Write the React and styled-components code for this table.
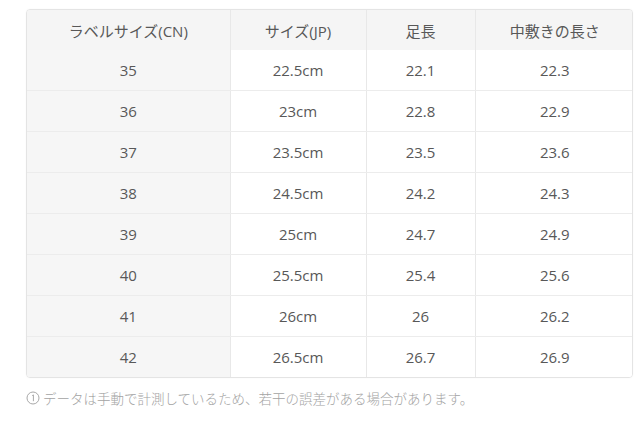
import React from 'react';
import styled, { createGlobalStyle } from 'styled-components';

const GlobalStyle = createGlobalStyle`
  body {
    margin: 0;
    background: #ffffff;
    font-family: "Open Sans", "Noto Sans CJK JP", sans-serif;
  }
`;

const Page = styled.div`
  padding: 9px 7px 0 26px;
  width: 607px;
`;

const TableWrap = styled.div`
  border: 1px solid #e4e4e4;
  border-radius: 4px;
  overflow: hidden;
  box-shadow: 0 0 2px rgba(0, 0, 0, 0.04);
`;

const Table = styled.table`
  width: 100%;
  border-collapse: collapse;
  table-layout: fixed;
  font-size: 15px;
  color: #585858;
`;

const Cell = styled.td`
  height: 40px;
  padding: 0;
  text-align: center;
  border-right: 1px solid #e8e8e8;
  border-bottom: 1px solid #ececec;
  background: ${p => (p.$shade ? '#f6f6f6' : '#ffffff')};
  font-weight: 400;
  &:last-child {
    border-right: none;
  }
  tr:last-child > & {
    border-bottom: none;
  }
`;

const HeadCell = styled(Cell).attrs({ as: 'th' })`
  background: #f5f5f5;
  font-weight: 400;
`;

const Note = styled.div`
  display: flex;
  align-items: center;
  gap: 3px;
  margin-top: 10px;
  font-size: 13.5px;
  color: #a3a3a3;
  font-family: "Noto Sans CJK JP", sans-serif;
  font-weight: 300;
`;

const InfoIcon = () => (
  <svg width="14" height="14" viewBox="0 0 14 14">
    <circle cx="7" cy="7" r="6" fill="none" stroke="#a8a8a8" strokeWidth="1" />
    <path d="M6.2 4.6 L7.4 3.9 V10.2" fill="none" stroke="#a8a8a8" strokeWidth="1" />
  </svg>
);

const headers = ['ラベルサイズ(CN)', 'サイズ(JP)', '足長', '中敷きの長さ'];
const rows = [
  ['35', '22.5cm', '22.1', '22.3'],
  ['36', '23cm', '22.8', '22.9'],
  ['37', '23.5cm', '23.5', '23.6'],
  ['38', '24.5cm', '24.2', '24.3'],
  ['39', '25cm', '24.7', '24.9'],
  ['40', '25.5cm', '25.4', '25.6'],
  ['41', '26cm', '26', '26.2'],
  ['42', '26.5cm', '26.7', '26.9'],
];
const widths = [203, 136, 109, 159];

export default function App() {
  return (
    <Page>
      <GlobalStyle />
      <TableWrap>
        <Table>
          <colgroup>
            {widths.map((w, i) => (
              <col key={i} style={{ width: w }} />
            ))}
          </colgroup>
          <thead>
            <tr>
              {headers.map(h => (
                <HeadCell key={h}>{h}</HeadCell>
              ))}
            </tr>
          </thead>
          <tbody>
            {rows.map(r => (
              <tr key={r[0]}>
                {r.map((v, i) => (
                  <Cell key={i} $shade={i === 0}>{v}</Cell>
                ))}
              </tr>
            ))}
          </tbody>
        </Table>
      </TableWrap>
      <Note>
        <InfoIcon />
        <span>データは手動で計測しているため、若干の誤差がある場合があります。</span>
      </Note>
    </Page>
  );
}
